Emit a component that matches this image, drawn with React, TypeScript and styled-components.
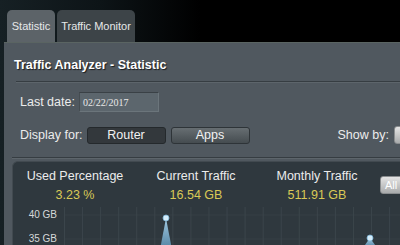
import React from "react";
import styled, { createGlobalStyle } from "styled-components";

const GlobalStyle = createGlobalStyle`
  html, body { margin: 0; padding: 0; background: #000; }
  body { font-family: "Liberation Sans", Arial, sans-serif; overflow: hidden; }
  * { box-sizing: border-box; }
`;

const Page = styled.div`
  width: 400px;
  height: 245px;
  overflow: hidden;
  display: flex;
  flex-direction: column;
  padding-left: 4px;
  background: linear-gradient(90deg, #162024 0%, #0d1417 25%, #000 50%);
`;

const TabBar = styled.div`
  display: flex;
  gap: 2px;
  padding: 10px 0 0 3px;
  height: 42px;
  flex-shrink: 0;
`;

const Tab = styled.div<{ $active?: boolean; $w: number }>`
  width: ${(p) => p.$w}px;
  height: 32px;
  border-radius: 5px 5px 0 0;
  background: ${(p) => (p.$active ? "#5c6368" : "#3d4448")};
  color: #e6e8e8;
  font-size: 11px;
  display: flex;
  align-items: center;
  justify-content: center;
  padding-bottom: 1px;
`;

const Panel = styled.div`
  flex: 1;
  background: #50585f;
  border-top: 1px solid #5a6462;
  padding-left: 8px;
  display: flex;
  flex-direction: column;
  overflow: hidden;
`;

const Title = styled.div`
  height: 38px;
  display: flex;
  align-items: center;
  padding-left: 2px;
  padding-top: 5px;
  font-size: 12.5px;
  font-weight: bold;
  color: #fff;
  text-shadow: 1px 1px 1px rgba(0, 0, 0, 0.7);
  white-space: nowrap;
  flex-shrink: 0;
`;

const Divider = styled.div<{ $indent?: number; $top?: number }>`
  height: 2px;
  margin-left: ${(p) => p.$indent ?? 0}px;
  margin-top: ${(p) => p.$top ?? 0}px;
  border-top: 1px solid #363d42;
  border-bottom: 1px solid #5d656b;
  flex-shrink: 0;
`;

const Row = styled.div<{ $top: number }>`
  display: flex;
  align-items: center;
  gap: 4px;
  padding-left: 8px;
  margin-top: ${(p) => p.$top}px;
  height: 20px;
  white-space: nowrap;
  flex-shrink: 0;
  & > * { flex-shrink: 0; }
`;

const Label = styled.span`
  font-size: 12.5px;
  color: #ececec;
`;

const DateInput = styled.div`
  width: 80px;
  height: 20px;
  background: #5c666d;
  border: 1px solid #6b757b;
  border-top-color: #3a4146;
  border-left-color: #454c51;
  font-family: "Liberation Serif", "Times New Roman", serif;
  font-size: 10px;
  color: #e8e8e8;
  display: flex;
  align-items: center;
  padding-left: 3px;
`;

const SegButton = styled.div<{ $selected?: boolean }>`
  width: 79px;
  height: 17px;
  border-radius: 3px;
  border: 1px solid ${(p) => (p.$selected ? "#24292c" : "#2e3438")};
  background: ${(p) =>
    p.$selected ? "#33383c" : "linear-gradient(#676e72, #454c50)"};
  color: #f2f2f2;
  font-size: 12.5px;
  display: flex;
  align-items: center;
  justify-content: center;
  margin-right: 1px;
`;

const ShowBy = styled.div`
  margin-left: 83px;
  display: flex;
  align-items: center;
  gap: 5px;
`;

const LightButton = styled.div<{ $w: number; $h: number }>`
  width: ${(p) => p.$w}px;
  height: ${(p) => p.$h}px;
  border-radius: 3px;
  background: linear-gradient(#e4e4e4, #a9abac);
  border: 1px solid #8a8d8f;
  color: #fff;
  font-size: 11px;
  display: flex;
  align-items: center;
  padding-left: 4px;
  flex-shrink: 0;
`;

const Card = styled.div`
  margin-top: 2px;
  margin-right: -12px;
  flex: 1;
  background: #2f383e;
  border: 1px solid #424a50;
  border-bottom: none;
  border-radius: 6px 6px 0 0;
  padding-left: 2px;
  display: flex;
  flex-direction: column;
`;

const StatsRow = styled.div`
  display: flex;
  align-items: flex-start;
  padding-top: 7px;
  & > * { flex-shrink: 0; }
`;

const Stat = styled.div<{ $w: number }>`
  width: ${(p) => p.$w}px;
  display: flex;
  flex-direction: column;
  align-items: center;
  white-space: nowrap;
`;

const StatLabel = styled.div`
  font-size: 12.5px;
  line-height: 14px;
  color: #ececec;
`;

const StatValue = styled.div`
  font-size: 12.5px;
  line-height: 14px;
  margin-top: 5px;
  color: #d9c956;
`;

const AllWrap = styled.div`
  margin-left: 3px;
  margin-top: 7px;
`;

const Chart = styled.div`
  display: flex;
  margin-top: 5px;
  flex: 1;
`;

const YAxis = styled.div`
  width: 42px;
  margin-right: 7px;
  display: flex;
  flex-direction: column;
  align-items: flex-end;
  padding-top: 1px;
  gap: 10px;
  flex-shrink: 0;
`;

const YLabel = styled.div`
  font-size: 10px;
  line-height: 14px;
  color: #d6d8d9;
  white-space: nowrap;
`;

const Plot = styled.svg`
  flex-shrink: 0;
  display: block;
`;

const stats = [
  { label: "Used Percentage", value: "3.23 %", w: 120 },
  { label: "Current Traffic", value: "16.54 GB", w: 122 },
  { label: "Monthly Traffic", value: "511.91 GB", w: 120 },
];

const peaks = [
  { x: 102, y: 11, hw: 5.5, d: 29 },
  { x: 306, y: 31, hw: 6.5, d: 9 },
];

export default function App() {
  const vlines = Array.from({ length: 20 }, (_, i) => i * 18.06);
  return (
    <>
      <GlobalStyle />
      <Page>
        <TabBar>
          <Tab $active $w={48}>Statistic</Tab>
          <Tab $w={78}>Traffic Monitor</Tab>
        </TabBar>
        <Panel>
          <Title>Traffic Analyzer - Statistic</Title>
          <Divider $indent={4} />
          <Row $top={9}>
            <Label>Last date:</Label>
            <DateInput>02/22/2017</DateInput>
          </Row>
          <Row $top={13}>
            <Label>Display for:</Label>
            <SegButton $selected>Router</SegButton>
            <SegButton>Apps</SegButton>
            <ShowBy>
              <Label>Show by:</Label>
              <LightButton $w={40} $h={18} />
            </ShowBy>
          </Row>
          <Divider $top={12} />
          <Card>
            <StatsRow>
              {stats.map((s) => (
                <Stat key={s.label} $w={s.w}>
                  <StatLabel>{s.label}</StatLabel>
                  <StatValue>{s.value}</StatValue>
                </Stat>
              ))}
              <AllWrap>
                <LightButton $w={30} $h={18}>All</LightButton>
              </AllWrap>
            </StatsRow>
            <Chart>
              <YAxis>
                <YLabel>40 GB</YLabel>
                <YLabel>35 GB</YLabel>
              </YAxis>
              <Plot viewBox="0 0 350 40" width={350} height={40}>
                <defs>
                  <linearGradient id="spike" x1="0" y1="0" x2="0" y2="1">
                    <stop offset="0" stopColor="#a9d3ec" stopOpacity="0.95" />
                    <stop offset="1" stopColor="#5f95b8" stopOpacity="0.85" />
                  </linearGradient>
                </defs>
                <line x1="0" y1="8" x2="350" y2="8" stroke="#363f45" strokeWidth="1" />
                <line x1="0" y1="32" x2="350" y2="32" stroke="#363f45" strokeWidth="1" />
                {vlines.map((x) => (
                  <line key={x} x1={x + 0.5} y1="0" x2={x + 0.5} y2="40" stroke="#3b454b" strokeWidth="1" />
                ))}
                {peaks.map((p) => (
                  <g key={p.x}>
                    <polygon
                      points={`${p.x},${p.y} ${p.x - p.hw * ((40 - p.y) / p.d)},40 ${p.x + p.hw * ((40 - p.y) / p.d)},40`}
                      fill="url(#spike)"
                    />
                    <circle cx={p.x} cy={p.y} r="3" fill="#d4ecfa" stroke="#7fb6d8" strokeWidth="0.8" />
                  </g>
                ))}
              </Plot>
            </Chart>
          </Card>
        </Panel>
      </Page>
    </>
  );
}
